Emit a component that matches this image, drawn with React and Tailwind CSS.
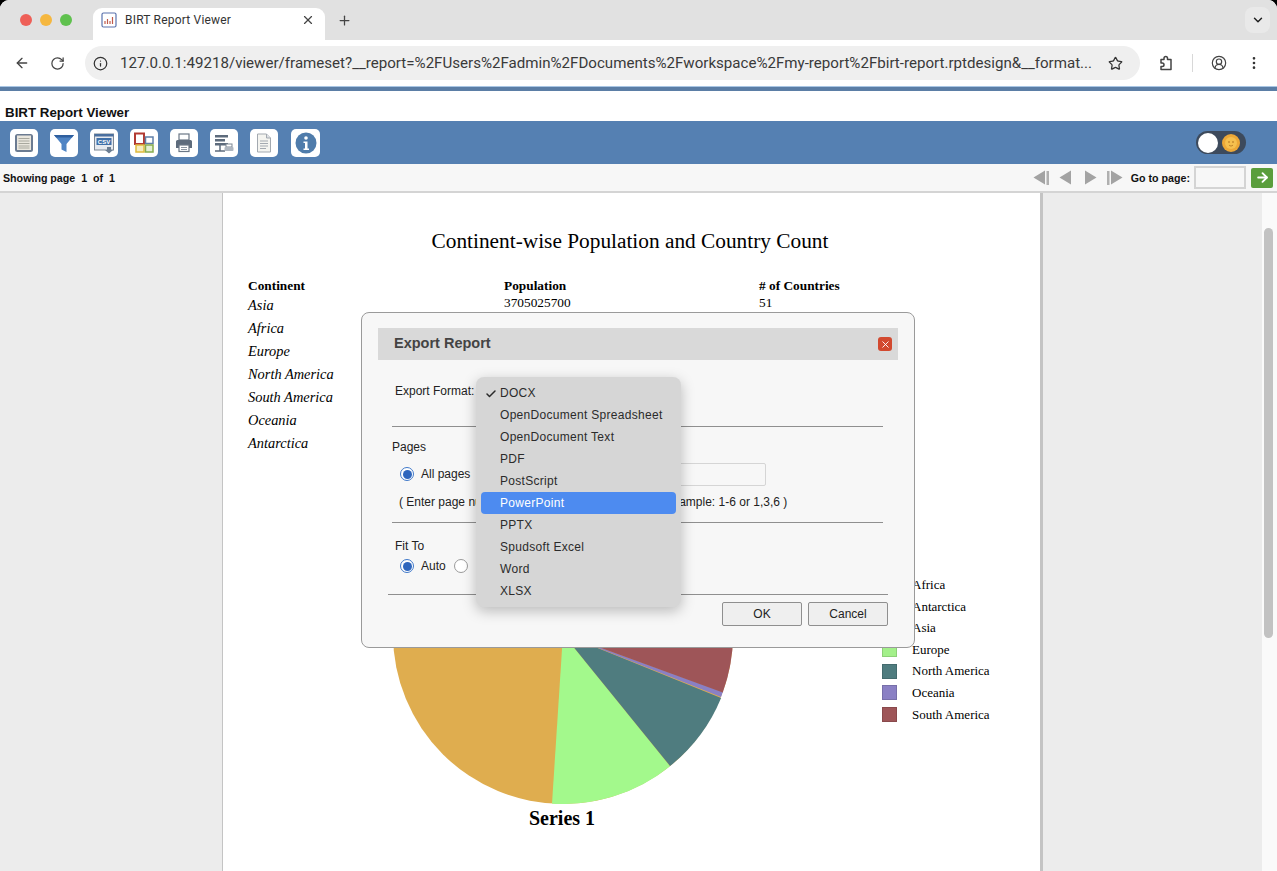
import { ArrowLeft, ArrowRight, Check, ChevronDown, CircleUserRound, EllipsisVertical, Info, Plus, RotateCw, Star, X } from "lucide-react";

const formats = [
  "DOCX",
  "OpenDocument Spreadsheet",
  "OpenDocument Text",
  "PDF",
  "PostScript",
  "PowerPoint",
  "PPTX",
  "Spudsoft Excel",
  "Word",
  "XLSX",
];

const legend = [
  ["Africa", "bg-[#7f9cc9]"],
  ["Antarctica", "bg-[#c9607a]"],
  ["Asia", "bg-[#dfad4f]"],
  ["Europe", "bg-[#a3f08a]"],
  ["North America", "bg-[#4f7c7f]"],
  ["Oceania", "bg-[#8a80c4]"],
  ["South America", "bg-[#9e5558]"],
];

const Tile = ({ children }) => (
  <div className="w-[28px] h-[28px] bg-white rounded-[5px] flex items-center justify-center">
    <svg width="22" height="22" viewBox="0 0 22 22" fill="none">
      {children}
    </svg>
  </div>
);

const ToolbarIcons = () => (
  <div className="flex items-center gap-[12px] pl-[10px]">
    <Tile>
      <rect x="2" y="2" width="18" height="18" rx="2.500" fill="#6b7b91" />
      <rect x="4" y="3.500" width="14" height="14.500" fill="#e9e6dd" />
      <path d="M5.500 6.500h11M5.500 9h11M5.500 11.500h11M5.500 14h11M5.500 16h11" stroke="#a8a89e" strokeWidth="1" />
    </Tile>
    <Tile>
      <path d="M1 3h20l-7.500 9v8l-5-2.500V12z" fill="#4f84c4" />
      <path d="M1 3h20l-2 2.500H3z" fill="#2f5f9e" />
    </Tile>
    <Tile>
      <rect x="1.500" y="2" width="19" height="16" fill="#e6e9ee" stroke="#7d8794" />
      <rect x="1.500" y="2" width="19" height="2.500" fill="#4a6f9e" />
      <rect x="3.500" y="6" width="15" height="7" fill="#3f6fa8" />
      <text x="11" y="12" textAnchor="middle" fontSize="6" fontWeight="700" fill="#fff" fontFamily="Liberation Sans, sans-serif">CSV</text>
      <path d="M14 15h4v3h2l-4 3.500-4-3.500h2z" fill="#6b7d92" />
    </Tile>
    <Tile>
      <rect x="2" y="1.500" width="9" height="10.500" fill="none" stroke="#b23a32" strokeWidth="2" />
      <rect x="12.500" y="5" width="7.500" height="6.500" fill="none" stroke="#5f7fa8" strokeWidth="1.500" />
      <rect x="3" y="13" width="8" height="7" fill="#f5ecc0" stroke="#e0bb3c" strokeWidth="1.500" />
      <rect x="12.500" y="13" width="7.500" height="7" fill="#e4efd4" stroke="#86ad4e" strokeWidth="1.500" />
    </Tile>
    <Tile>
      <rect x="6" y="2" width="10" height="6" fill="#fff" stroke="#6b7786" strokeWidth="1.200" />
      <path d="M3 9.500a1.500 1.500 0 0 1 1.500-1.500h13A1.500 1.500 0 0 1 19 9.500V16H3z" fill="#5d6b7c" />
      <rect x="6" y="13" width="10" height="6.500" fill="#fff" stroke="#6b7786" strokeWidth="1.200" />
      <path d="M8 15.500h6M8 17.500h6" stroke="#8d97a3" />
    </Tile>
    <Tile>
      <path d="M2 3h13v2.500H2zM2 7h10v2.500H2zM2 11h13v2.500H2z" fill="#5d6b7c" />
      <path d="M7 13v5.500M2 19h10" stroke="#5d6b7c" strokeWidth="1.500" />
      <rect x="13" y="12" width="6" height="3" fill="#fff" stroke="#7d8794" />
      <rect x="11.500" y="15" width="9" height="4" rx="1" fill="#aeb6c0" />
    </Tile>
    <Tile>
      <path d="M4.500 2h9l4 4v14h-13z" fill="#f4f4f0" stroke="#a3a9b0" />
      <path d="M13.500 2v4h4" fill="#dfe2e6" stroke="#a3a9b0" />
      <path d="M7 9h8M7 11.500h8M7 14h8M7 16.500h6" stroke="#a3a9b0" />
    </Tile>
    <div className="w-[29px] h-[28px] bg-white rounded-[5px] flex items-center justify-center ml-[1px]">
      <svg width="22" height="22" viewBox="0 0 22 22">
        <circle cx="11" cy="11" r="10.500" fill="#4f7cab" />
        <circle cx="11" cy="6" r="1.800" fill="#fff" />
        <path d="M8.500 9.500h4v7h1.500v1.500H8.500v-1.500H10V11H8.500z" fill="#fff" />
      </svg>
    </div>
  </div>
);

const NavArrow = ({ dir, bar }) => (
  <svg width="18" height="17" viewBox="0 0 18 17">
    {dir === "left" ? (
      <path d="M13 1.500v14L1.500 8.500z" fill="#a3a3a3" />
    ) : (
      <path d="M5 1.500v14L16.500 8.500z" fill="#a3a3a3" />
    )}
    {bar === "right" && <rect x="14.500" y="2" width="2.500" height="14" fill="#b0b0b0" />}
    {bar === "left" && <rect x="1" y="2" width="2.500" height="14" fill="#b0b0b0" />}
  </svg>
);

const Radio = ({ checked }) =>
  checked ? (
    <span className="w-[14px] h-[14px] rounded-full border border-[#3f78c9] bg-white flex items-center justify-center shrink-0">
      <span className="w-[9px] h-[9px] rounded-full bg-[#2f66bd]" />
    </span>
  ) : (
    <span className="w-[14px] h-[14px] rounded-full border border-[#9a9a9a] bg-white shrink-0" />
  );

const Pie = () => (
  <svg width="340" height="340" viewBox="0 0 340 340" className="block">
    <circle cx="170" cy="170" r="170" fill="#dfad4f" />
    <path d="M170 170L159 339.640A170 170 0 0 0 277.100 302.200z" fill="#a3f98c" />
    <path d="M170 170L277.100 302A170 170 0 0 0 328.100 234z" fill="#4f7c7f" />
    <path d="M170 170L328.100 233A170 170 0 0 0 329.800 228z" fill="#8a80c4" />
    <path d="M170 170L329.800 228.500A170 170 0 0 0 340 170z" fill="#9e5558" />
  </svg>
);

const ExportDialog = () => (
  <div className="absolute left-[361px] top-[312px] w-[554px] h-[336px] bg-[#f7f7f7] border border-[#9a9a9a] rounded-[8px] pt-[15px] px-[16px] text-[12px] text-[#222] font-['Liberation_Sans',Arial,sans-serif]">
    <div className="h-[32px] bg-[#d9d9d9] flex items-center justify-between pl-[16px] pr-[6px]">
      <span className="text-[14.500px] font-bold text-[#444]">Export Report</span>
      <span className="w-[14px] h-[14px] rounded-[3px] bg-[#d2492f] flex items-center justify-center">
        <X size={11} color="#fff" strokeWidth={2} />
      </span>
    </div>
    <div className="pl-[14px] pr-[15px]">
      <div className="h-[67px] pl-[3px] pt-[24px] leading-[14px] border-b border-[#8f8f8f]">Export Format:</div>
      <div className="pt-[13px] leading-[14px]">Pages</div>
      <div className="flex items-center h-[22px] mt-[9px] pl-[8px]">
        <Radio checked />
        <span className="ml-[7px]">All pages</span>
        <span className="ml-auto mr-[117px] w-[100px] h-[23px] border border-[#d5d5d5] bg-[#f7f7f7] rounded-[2px]" />
      </div>
      <div className="pl-[7px] pt-[10px] leading-[14px] pb-[13px] border-b border-[#8f8f8f]">( Enter page numbers and/or the page ranges, for example: 1-6 or 1,3,6 )</div>
      <div className="pl-[3px] pt-[16px] leading-[14px]">Fit To</div>
      <div className="flex items-center h-[14px] mt-[6px] pl-[8px]">
        <Radio checked />
        <span className="ml-[7px]">Auto</span>
        <span className="ml-[8px] flex"><Radio /></span>
      </div>
    </div>
    <div className="mt-[21px] mx-[10px] border-t border-[#8f8f8f] flex justify-end gap-[6px] pt-[7px]">
      <button className="w-[80px] h-[24px] bg-[#efefef] border border-[#8f8f8f] rounded-[2px] text-[12px]">OK</button>
      <button className="w-[80px] h-[24px] bg-[#efefef] border border-[#8f8f8f] rounded-[2px] text-[12px]">Cancel</button>
    </div>
    <div className="absolute left-[114px] top-[64px] w-[205px] bg-[#d6d6d6] rounded-[8px] py-[5px] px-[5px] shadow-[0_4px_14px_rgba(0,0,0,0.25)]">
      {formats.map((f) => (
        <div
          key={f}
          className={`h-[22px] rounded-[4px] flex items-center pl-[19px] relative text-[12px] tracking-[0.3px] ${
            f === "PowerPoint" ? "bg-[#4d8bf0] text-white" : "text-[#2b2b2b]"
          }`}
        >
          {f === "DOCX" && <Check size={12} strokeWidth={3} className="absolute left-[4px] top-[6px]" />}
          {f}
        </div>
      ))}
    </div>
  </div>
);

export default function App() {
  return (
    <div className="relative h-[871px] overflow-hidden bg-black font-['Liberation_Sans',Arial,sans-serif]">
      <div className="h-full flex flex-col bg-white rounded-t-[9px] overflow-hidden">
        {/* tab strip */}
        <div className="h-[40px] bg-[#e1e1e1] flex items-end shrink-0 relative">
          <div className="flex items-center gap-[8px] pl-[20px] self-center pb-[1px]">
            <span className="w-[12px] h-[12px] rounded-full bg-[#ee5f57]" />
            <span className="w-[12px] h-[12px] rounded-full bg-[#f5b73f]" />
            <span className="w-[12px] h-[12px] rounded-full bg-[#5fc14e]" />
          </div>
          <div className="ml-[21px] w-[232px] h-[32px] bg-white rounded-t-[9px] flex items-center pl-[8px] pr-[10px] pb-[9px]">
            <svg width="16" height="16" viewBox="0 0 16 16" fill="none">
              <rect x="1" y="1" width="14" height="14" rx="1.500" stroke="#5a72ad" strokeWidth="1.200" />
              <path d="M4 12V9M6.500 12V7M9 12V9M11.500 12V5" stroke="#c05a4a" strokeWidth="1.200" />
            </svg>
            <span className="ml-[8px] text-[12px] text-[#333] font-['Roboto',sans-serif] tracking-[0.2px]">BIRT Report Viewer</span>
            <X size={14} color="#444" strokeWidth={2} className="ml-auto" />
          </div>
          <Plus size={15} color="#444" strokeWidth={2} className="ml-[12px] self-center" />
          <div className="absolute right-[7px] top-[7px] w-[25px] h-[26px] rounded-[8px] bg-[#e9e9e9] flex items-center justify-center">
            <ChevronDown size={14} color="#222" strokeWidth={2.500} />
          </div>
        </div>
        {/* address bar */}
        <div className="h-[46px] bg-white flex items-center shrink-0 pl-[14px] pr-[14px]">
          <ArrowLeft size={16} color="#444" strokeWidth={2} />
          <RotateCw size={15} color="#444" strokeWidth={2} className="ml-[20px]" />
          <div className="ml-[20px] w-[1055px] h-[34px] rounded-full bg-[#efefef] flex items-center pl-[8px]">
            <Info size={15} color="#333" strokeWidth={2} />
            <span className="ml-[12px] text-[15.100px] text-[#3a3a3a] font-['Roboto',sans-serif] whitespace-nowrap">
              127.0.0.1:49218/viewer/frameset?__report=%2FUsers%2Fadmin%2FDocuments%2Fworkspace%2Fmy-report%2Fbirt-report.rptdesign&__format...
            </span>
            <Star size={15} color="#333" strokeWidth={2} className="ml-auto mr-[17px]" />
          </div>
          <svg width="16" height="16" viewBox="0 0 16 16" fill="none" stroke="#444" strokeWidth="1.500" strokeLinejoin="round" className="ml-[18px]">
            <path d="M3 4.500h3V3.250a1.750 1.750 0 0 1 3.500 0V4.500h3.500v10H3v-3h1.250a1.750 1.750 0 0 0 0-3.500H3z" />
          </svg>
          <span className="ml-[18px] w-px h-[18px] bg-[#d8d8d8]" />
          <CircleUserRound size={16} color="#444" strokeWidth={1.800} className="ml-[18px]" />
          <EllipsisVertical size={16} color="#333" strokeWidth={2} className="ml-[19px]" />
        </div>
        <div className="h-[5px] bg-[#5b7ea6] border-t border-[#a9c6e4] shrink-0" />
        {/* viewer title */}
        <div className="h-[30px] bg-white flex items-end shrink-0 pl-[5px] text-[13.330px] font-bold text-[#111] leading-[16px]">
          BIRT Report Viewer
        </div>
        {/* toolbar */}
        <div className="h-[43px] bg-[#5580b2] flex items-center justify-between shrink-0 pr-[31px]">
          <ToolbarIcons />
          <div className="w-[50px] h-[23px] rounded-full bg-[#3d4a5c] flex items-center pl-[2px] gap-[4px]">
            <span className="w-[20px] h-[20px] rounded-full bg-white" />
            <svg width="18" height="18" viewBox="0 0 18 18">
              <circle cx="9" cy="9" r="9" fill="#eda837" />
              <circle cx="9" cy="9" r="6" fill="#f6c04e" />
              <circle cx="7" cy="8" r="0.800" fill="#a8691c" />
              <circle cx="11" cy="8" r="0.800" fill="#a8691c" />
              <path d="M7 11a2.500 2.500 0 0 0 4 0" stroke="#a8691c" strokeWidth="0.700" fill="none" />
            </svg>
          </div>
        </div>
        {/* page bar */}
        <div className="h-[29px] bg-[#f7f7f7] flex items-center shrink-0 pl-[3px] pr-[4px] text-[10.670px] font-bold text-[#111] border-b-2 border-[#d4d4d4]">
          <span className="whitespace-pre">Showing page  1  of  1</span>
          <div className="ml-auto flex items-center gap-[4px]">
            <NavArrow dir="left" bar="right" />
            <span className="ml-[4px] flex"><NavArrow dir="left" /></span>
            <NavArrow dir="right" />
            <span className="ml-[4px] flex"><NavArrow dir="right" bar="left" /></span>
            <span className="ml-[3px]">Go to page:</span>
            <span className="w-[52px] h-[23px] border-2 border-[#d4d4d4] bg-[#f7f7f7]" />
            <span className="ml-[1px] w-[22px] h-[20px] rounded-[2px] bg-[#5a9e3c] flex items-center justify-center">
              <ArrowRight size={15} color="#fff" strokeWidth={3} />
            </span>
          </div>
        </div>
        {/* report area */}
        <div className="flex-1 flex min-h-0">
          <div className="w-[222px] bg-[#ececec] shrink-0" />
          <div className="w-[821px] shrink-0 bg-white border-l border-r-[3px] border-l-[#c4c4c4] border-r-[#c4c4c4] font-['Liberation_Serif','Times_New_Roman',serif] text-black">
            <div className="pt-[35px] pr-[3px] text-center text-[21.330px] leading-[26px]">Continent-wise Population and Country Count</div>
            <div className="grid grid-cols-[256px_255px_1fr] pl-[25px] mt-[23px] text-[13.330px] leading-[17px]">
              <span className="font-bold">Continent</span>
              <span className="font-bold">Population</span>
              <span className="font-bold"># of Countries</span>
              <div className="italic text-[14.400px] leading-[23px]">
                <div>Asia</div>
                <div>Africa</div>
                <div>Europe</div>
                <div>North America</div>
                <div>South America</div>
                <div>Oceania</div>
                <div>Antarctica</div>
              </div>
              <span>3705025700</span>
              <span>51</span>
            </div>
            <div className="flex mt-[9px]">
              <div className="ml-[170px] w-[340px] shrink-0">
                <Pie />
                <div className="text-center font-bold text-[20px] leading-[24px] mt-[2px] pr-[2px]">Series 1</div>
              </div>
              <div className="ml-[149px] mt-[110px] flex flex-col">
                {legend.map(([name, color]) => (
                  <div key={name} className="h-[21.600px] flex items-center text-[13px]">
                    <span className={`w-[15px] h-[15px] border border-[#00000022] ${color}`} />
                    <span className="ml-[15px]">{name}</span>
                  </div>
                ))}
              </div>
            </div>
          </div>
          <div className="flex-1 bg-[#ececec]" />
          <div className="w-[15px] shrink-0 bg-[#fafafa] pt-[35px] pl-[2px]">
            <div className="w-[9px] h-[410px] rounded-full bg-[#c2c2c2]" />
          </div>
        </div>
      </div>
      <ExportDialog />
    </div>
  );
}
